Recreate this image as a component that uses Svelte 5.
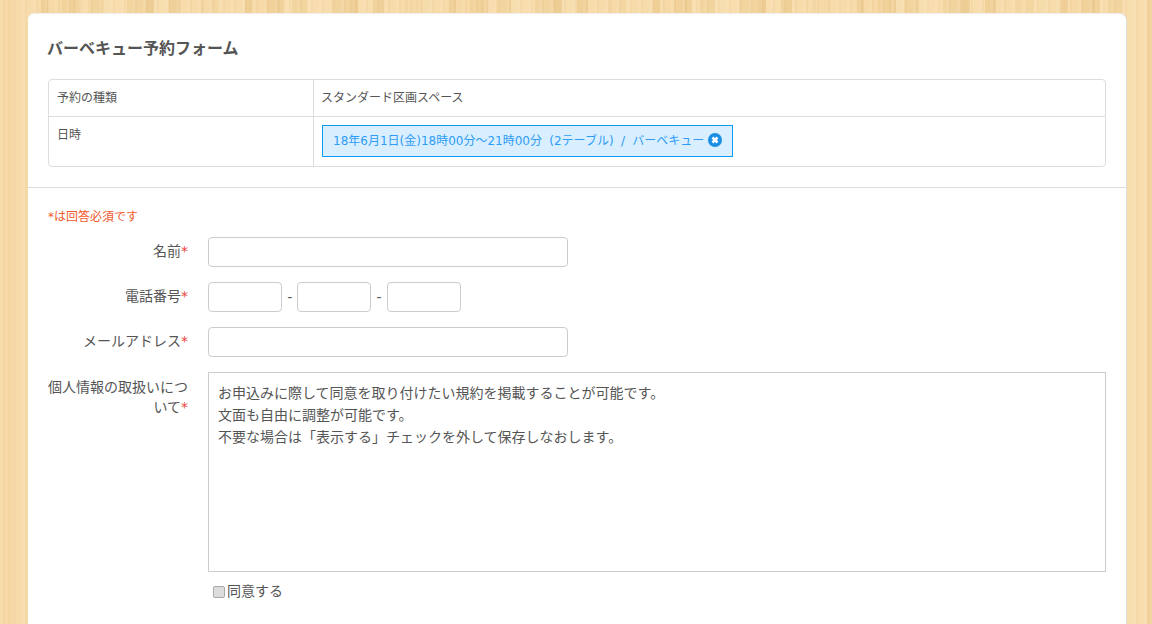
<script lang="ts">
    const reservation = "18年6月1日(金)18時00分～21時00分 (2テーブル) / バーベキュー";
    const terms = [
        "お申込みに際して同意を取り付けたい規約を掲載することが可能です。",
        "文面も自由に調整が可能です。",
        "不要な場合は「表示する」チェックを外して保存しなおします。",
    ];
</script>

<main class="page">
    <div class="card">
        <section class="summary">
            <h1>バーベキュー予約フォーム</h1>
            <div class="table">
                <div class="cell head first">予約の種類</div>
                <div class="cell first">スタンダード区画スペース</div>
                <div class="cell head date">日時</div>
                <div class="cell">
                    <span class="chip">
                        {reservation}
                        <svg viewBox="0 0 14 14" width="14" height="14" aria-hidden="true">
                            <circle cx="7" cy="7" r="7" fill="#1a8fe3" />
                            <path d="M4.5 4.5l5 5M9.5 4.5l-5 5" stroke="#fff" stroke-width="2.6" />
                        </svg>
                    </span>
                </div>
            </div>
        </section>

        <form class="form">
            <p class="note">*は回答必須です</p>

            <div class="row">
                <label for="name">名前<em>*</em></label>
                <input id="name" class="wide" type="text" />
            </div>

            <div class="row">
                <label for="tel1">電話番号<em>*</em></label>
                <div class="tel">
                    <input id="tel1" type="text" />
                    <span>-</span>
                    <input type="text" aria-label="電話番号2" />
                    <span>-</span>
                    <input type="text" aria-label="電話番号3" />
                </div>
            </div>

            <div class="row">
                <label for="mail">メールアドレス<em>*</em></label>
                <input id="mail" class="wide" type="text" />
            </div>

            <div class="row terms-row">
                <div class="label">個人情報の取扱いについて<em>*</em></div>
                <div class="terms-col">
                    <div class="terms">
                        {#each terms as line}
                            <p>{line}</p>
                        {/each}
                    </div>
                    <label class="agree"><input type="checkbox" />同意する</label>
                </div>
            </div>
        </form>
    </div>
</main>

<style>
    :global(body) {
        margin: 0;
        height: 624px;
        overflow: hidden;
        background-color: #f8dcab;
        /* wood planks: fine grain over one tile of stripes */
        background-image:
            repeating-linear-gradient(
                90deg,
                rgba(255, 255, 255, 0.07) 0 3px,
                rgba(190, 130, 60, 0.05) 3px 5px,
                transparent 5px 11px
            ),
            linear-gradient(
                90deg,
                #f6d9a6 0 8px,
                #f4d6a1 8px 14px,
                #f7dcab 14px 41px,
                #efcf96 41px 48px,
                #f6d9a6 48px 62px,
                #f1d29b 62px 73px,
                #edcc92 73px 75px,
                #f1d29b 75px 80px,
                #f8deae 80px 88px,
                #f2d49e 88px 103px,
                #f8deae 103px 127px,
                #f2d49f 127px 146px,
                #eecd94 146px 154px,
                #f8ddad 154px 169px,
                #f0d099 169px 180px,
                #f7dbaa 180px 201px,
                #f2d5a0 201px 204px
            );
        background-size: auto, 204px 100%;
    }

    .page {
        padding: 14px 26px 0 28px;
        font-family: "DejaVu Sans", "Noto Sans CJK JP", sans-serif;
        color: #555;
        text-spacing-trim: space-all;
    }

    .card {
        background: #fff;
        border-radius: 6px 6px 0 0;
        box-shadow: 1px 0 0 #ddd, 0 -1px 0 #eee;
        height: 610px;
        overflow: hidden;
    }

    .summary {
        padding: 23px 20px 20px;
        border-bottom: 1px solid #ddd;
    }

    h1 {
        margin: 0 0 19px -1px;
        font-size: 16px;
        line-height: 23px;
        font-weight: 700;
        color: #555;
    }

    .table {
        display: grid;
        grid-template-columns: 265px 1fr;
        border: 1px solid #ddd;
        border-radius: 4px;
        font-size: 12px;
        color: #555;
    }

    .cell {
        padding: 8px 8px 9px 7px;
        min-width: 0;
    }

    .cell.head {
        padding-left: 8px;
        border-right: 1px solid #ddd;
    }

    .cell.first {
        height: 37px;
        box-sizing: border-box;
        line-height: 20px;
        border-bottom: 1px solid #ddd;
    }

    .date {
        padding-top: 9px;
        line-height: 18px;
    }

    .chip {
        display: inline-flex;
        align-items: center;
        gap: 4px;
        height: 32px;
        box-sizing: border-box;
        padding: 0 10px 3px;
        margin-left: 1px;
        vertical-align: top;
        word-spacing: 3.5px;
        background: #d9efff;
        border: 1px solid #0a9bf5;
        color: #2f9cf4;
    }

    .form {
        padding: 20px 20px 0;
    }

    .note {
        margin: 0 0 11px;
        font-size: 12px;
        line-height: 18px;
        color: #f0592b;
    }

    .row {
        display: flex;
        align-items: center;
        gap: 20px;
        margin-bottom: 15px;
    }

    .row > label,
    .label {
        flex: 0 0 140px;
        text-align: right;
        font-size: 14px;
        line-height: 20px;
        color: #555;
    }

    .row > label {
        margin-bottom: 2px;
    }

    .label {
        padding-top: 5px;
    }

    em {
        font-style: normal;
        color: #e8453c;
    }

    input[type="text"] {
        box-sizing: border-box;
        height: 30px;
        margin: 0;
        padding: 0 8px;
        background: #fff;
        border: 1px solid #ccc;
        border-radius: 4px;
    }

    .wide {
        width: 360px;
    }

    .tel {
        display: flex;
        align-items: center;
        gap: 5px;
        font-size: 14px;
    }

    .tel span {
        width: 5.4px;
        text-align: center;
    }

    .tel input {
        width: 74px;
    }

    .terms-row {
        align-items: flex-start;
    }

    .terms-col {
        flex: 1;
        min-width: 0;
    }

    .terms {
        box-sizing: border-box;
        height: 200px;
        padding: 9px;
        border: 1px solid #ccc;
        font-size: 14px;
        line-height: 22px;
        color: #555;
    }

    .terms p {
        margin: 0;
    }

    .agree {
        display: flex;
        align-items: center;
        margin-top: 9px;
        font-size: 14px;
        line-height: 20px;
    }

    .agree input {
        appearance: none;
        box-sizing: border-box;
        width: 12px;
        height: 12px;
        margin: 1px 2px 0 5px;
        background: #ddd;
        border: 1px solid #aaa;
        border-radius: 2px;
    }
</style>
